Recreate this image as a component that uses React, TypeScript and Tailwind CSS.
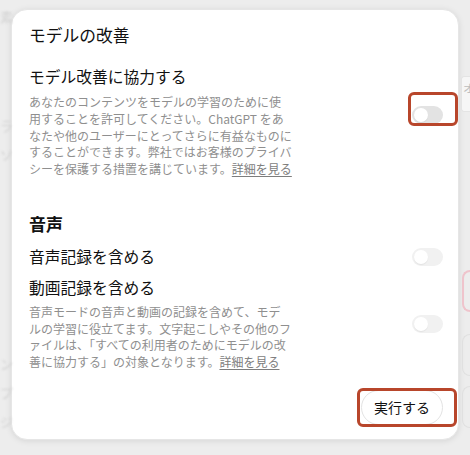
import React from "react";

const jp = { fontFamily: '"Noto Sans CJK JP", "Noto Sans", sans-serif' };

interface ToggleProps {
  dim?: boolean;
}

const Toggle: React.FC<ToggleProps> = ({ dim }) => (
  <div
    className={`w-[31px] h-[18px] rounded-full p-[2px] flex items-center ${
      dim ? "bg-[#f1f1f1]" : "bg-[#e3e3e3]"
    }`}
  >
    <div className="w-[14px] h-[14px] rounded-full bg-white shadow-[0_1px_1px_rgba(0,0,0,0.06)]" />
  </div>
);

// red annotation frame drawn on top of the screenshot
const Mark: React.FC<{ className: string }> = ({ className }) => (
  <div
    className={`absolute border-[3px] border-[#b8462b] rounded-[6px] pointer-events-none ${className}`}
  />
);

const Link = () => (
  <span className="underline underline-offset-2 text-[#7d7d7d]">詳細を見る</span>
);

export default function App() {
  return (
    <div
      className="w-[470px] h-[455px] bg-[#ededed] flex overflow-hidden"
      style={jp}
    >
      {/* blurred page behind, left edge */}
      <div className="w-[11px] flex flex-col text-[13px] text-[#d2d2d2] blur-[0.8px] leading-none">
        <span className="mt-[10px]">素</span>
        <span className="mt-[96px]">ラ</span>
        <span className="mt-[16px]">ソ</span>
        <span className="mt-[196px]">ン</span>
        <span className="mt-[16px]">プ</span>
        <span className="mt-[16px]">ジ</span>
      </div>

      {/* modal */}
      <div className="mt-[9px] w-[448px] h-[431px] bg-white rounded-[16px] shadow-[0_1px_6px_rgba(0,0,0,0.10)] border border-[#e6e6e6] pt-[13px] pb-[14px] pl-[17px] pr-[15px] flex flex-col text-[#111111]">
        <h2 className="text-[16.75px] leading-[24px]">モデルの改善</h2>

        <div className="mt-[19px] flex items-center gap-4">
          <div className="flex-1">
            <div className="text-[15.75px] leading-[22px]">モデル改善に協力する</div>
            <p className="mt-[6px] text-[12px] leading-[16.8px] text-[#8f8f8f]">
              あなたのコンテンツをモデルの学習のために使
              <br />
              用することを許可してください。ChatGPT をあ
              <br />
              なたや他のユーザーにとってさらに有益なものに
              <br />
              することができます。弊社ではお客様のプライバ
              <br />
              シーを保護する措置を講じています。<Link />
            </p>
          </div>
          <div className="relative mt-[-14px]">
            <Toggle />
            <Mark className="-left-[4px] -top-[14px] -right-[15px] -bottom-[2px]" />
          </div>
        </div>

        <h3 className="mt-[34px] text-[17px] leading-[24px] font-semibold">音声</h3>

        <div className="mt-[10px] flex items-center gap-4">
          <div className="flex-1 text-[15.75px] leading-[22px]">音声記録を含める</div>
          <Toggle dim />
        </div>

        <div className="mt-[9px] flex items-center gap-4">
          <div className="flex-1">
            <div className="text-[15.75px] leading-[22px]">動画記録を含める</div>
            <p className="mt-[5px] text-[12px] leading-[16.6px] text-[#8f8f8f]">
              音声モードの音声と動画の記録を含めて、モデ
              <br />
              ルの学習に役立てます。文字起こしやその他のフ
              <br />
              ァイルは、「すべての利用者のためにモデルの改
              <br />
              善に協力する」の対象となります。<Link />
            </p>
          </div>
          <Toggle dim />
        </div>

        <div className="mt-auto flex justify-end">
          <div className="relative">
            <button className="h-[35px] px-[12px] rounded-full border border-[#e3e3e3] bg-white text-[14px] text-[#111111]">
              実行する
            </button>
            <Mark className="-left-[4px] -top-[2px] -right-[14px] -bottom-[2px]" />
          </div>
        </div>
      </div>

      {/* blurred page behind, right edge */}
      <div className="flex-1 flex flex-col items-end">
        <div className="mt-[76px] w-[9px] h-[36px] bg-[#f6f6f6] border-y border-l border-[#e4e4e4] rounded-l-[3px] text-[11px] text-[#bdbdbd] leading-none pt-[6px] pl-[1px] overflow-hidden">
          オ
        </div>
        <div className="mt-[158px] w-[8px] h-[42px] rounded-l-full border-y-2 border-l-2 border-[#efc4cc]" />
        <div className="mt-[22px] w-[8px] h-[42px] rounded-l-full border-y border-l border-[#e0e0e0]" />
        <div className="mt-[10px] w-[8px] h-[42px] rounded-l-full border-y border-l border-[#e0e0e0]" />
      </div>
    </div>
  );
}
